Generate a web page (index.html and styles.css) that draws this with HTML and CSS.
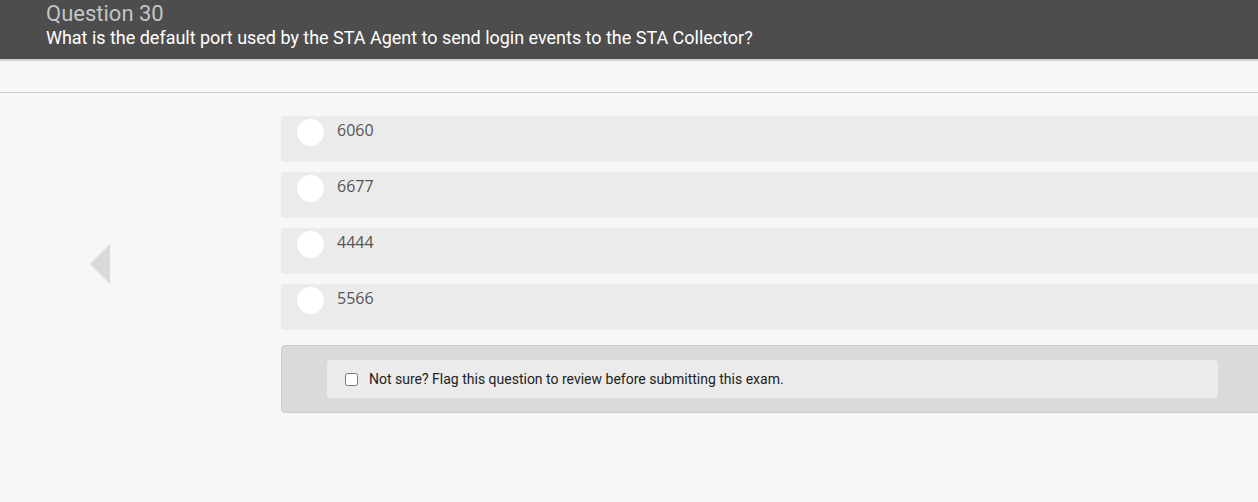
FILE: index.html
```html
<!DOCTYPE html>
<html lang="en">
<head>
<meta charset="utf-8">
<title>Question 30</title>
<link rel="stylesheet" href="styles.css">
</head>
<body>
<header class="q-header">
  <div class="q-number">Question 30</div>
  <div class="q-text">What is the default port used by the STA Agent to send login events to the STA Collector?</div>
</header>
<div class="toolbar"></div>
<main class="content">
  <div class="nav-col">
    <div class="prev-arrow"></div>
  </div>
  <div class="answers">
    <div class="option"><span class="radio"></span><span class="opt-text">6060</span></div>
    <div class="option"><span class="radio"></span><span class="opt-text">6677</span></div>
    <div class="option"><span class="radio"></span><span class="opt-text">4444</span></div>
    <div class="option"><span class="radio"></span><span class="opt-text">5566</span></div>
    <div class="flag-box">
      <label class="flag-inner">
        <input type="checkbox" class="flag-check">
        <span class="flag-text">Not sure? Flag this question to review before submitting this exam.</span>
      </label>
    </div>
  </div>
</main>
</body>
</html>
```
FILE: styles.css
```css
html, body {
  margin: 0;
  padding: 0;
}
body {
  background: #f7f7f7;
  overflow: hidden;
  width: 1258px;
  height: 502px;
  font-family: Roboto, "Liberation Sans", Arial, sans-serif;
}
.q-header {
  background: #4d4d4d;
  height: 61px;
  box-sizing: border-box;
  padding: 1px 0 0 46px;
  border-bottom: 2px solid #d2d2d2;
}
.q-number {
  color: #c4c4c4;
  font-size: 22px;
  line-height: 26px;
}
.q-text {
  color: #ffffff;
  font-size: 18px;
  font-weight: 400;
  line-height: 22px;
  letter-spacing: -0.02px;
}
.toolbar {
  height: 31px;
  border-bottom: 1px solid #cccccc;
}
.content {
  display: flex;
  padding-top: 23px;
}
.nav-col {
  width: 281px;
  flex-shrink: 0;
}
.prev-arrow {
  margin: 128px 0 0 90px;
  width: 0;
  height: 0;
  border-top: 20px solid transparent;
  border-bottom: 20px solid transparent;
  border-right: 20px solid #dadada;
}
.answers {
  width: 983px;
  flex-shrink: 0;
  display: flex;
  flex-direction: column;
  gap: 10px;
}
.option {
  display: flex;
  align-items: flex-start;
  height: 46px;
  box-sizing: border-box;
  padding: 3px 0 0 16px;
  background: #ebebeb;
  border-radius: 4px;
}
.radio {
  width: 27px;
  height: 27px;
  border-radius: 50%;
  background: #ffffff;
  flex-shrink: 0;
}
.opt-text {
  margin-left: 13px;
  font-family: "Open Sans", "Liberation Sans", sans-serif;
  font-size: 16px;
  line-height: 22px;
  color: #555555;
}
.flag-box {
  margin-top: 5px;
  background: #dadada;
  border: 1px solid #cccccc;
  border-radius: 4px;
  padding: 14px 45px 14px 45px;
}
.flag-inner {
  display: flex;
  align-items: center;
  height: 38px;
  background: #ebebeb;
  border-radius: 4px;
  padding-left: 18px;
}
.flag-check {
  width: 13px;
  height: 13px;
  margin: 0 11px 0 0;
}
.flag-text {
  font-size: 14px;
  color: #222222;
}
```
